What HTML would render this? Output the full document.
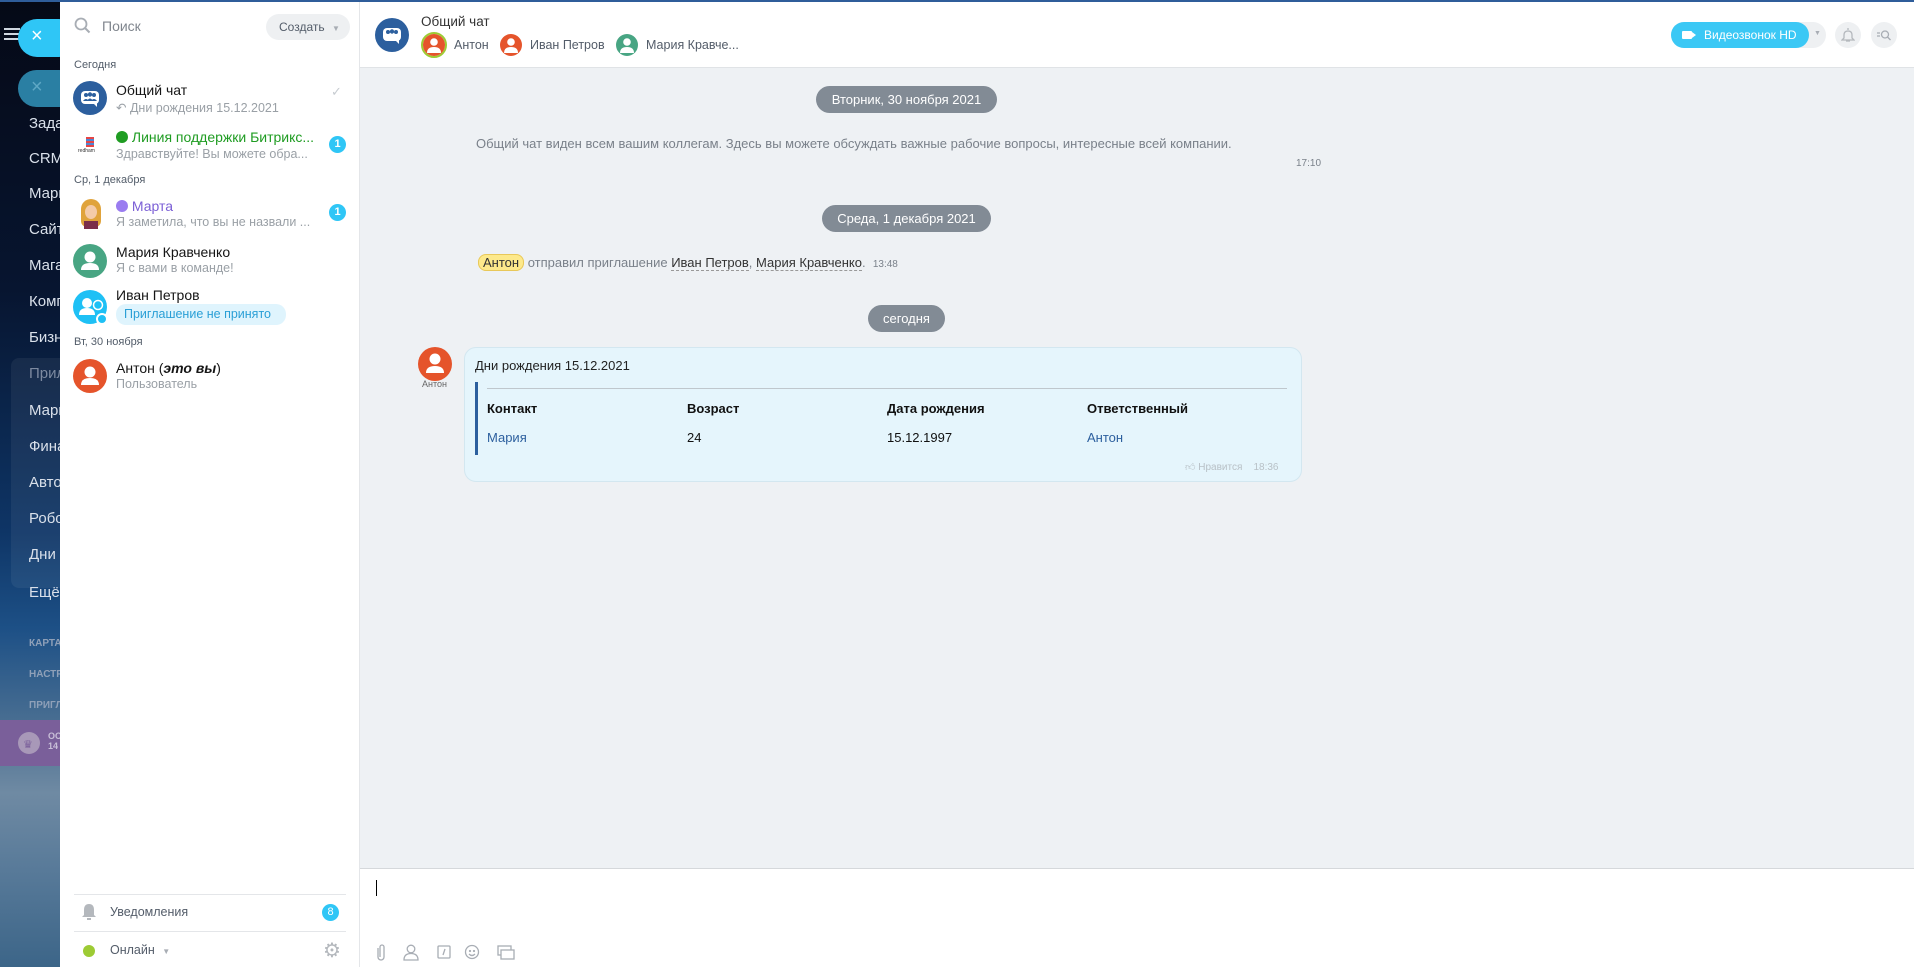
<!DOCTYPE html>
<html><head><meta charset="utf-8">
<style>
*{box-sizing:border-box;margin:0;padding:0}
body{width:1914px;height:967px;overflow:hidden;font-family:"Liberation Sans",Arial,sans-serif;position:relative;background:#fff}
.abs{position:absolute}
#side{left:0;top:0;width:60px;height:967px;background:linear-gradient(180deg,#050916 0%,#071530 30%,#0e3566 55%,#1d5086 65%,#4a6f92 75%,#6f8aa3 82%,#587a99 90%,#3c6588 100%)}
#side .it{position:absolute;left:29px;color:#d9e0ea;font-size:15px;white-space:nowrap}
#side .sm{position:absolute;left:29px;color:#8fa0b8;font-size:10px;font-weight:bold;white-space:nowrap}
#topline{left:0;top:0;width:1914px;height:2px;background:#2f5d9a;z-index:5}
#list{left:60px;top:0;width:300px;height:967px;background:#fff;border-right:1px solid #e4e6e9}
.sec{position:absolute;left:14px;font-size:11px;color:#525c69}
.av{position:absolute;left:13px;width:34px;height:34px;border-radius:50%}
.t1{position:absolute;left:56px;font-size:14px;color:#151515;white-space:nowrap}
.t2{position:absolute;left:56px;font-size:12.5px;color:#9aa0a6;white-space:nowrap}
.badge{position:absolute;left:269px;width:17px;height:17px;border-radius:50%;background:#2fc6f6;color:#fff;font-size:11px;font-weight:bold;text-align:center;line-height:17px}
.person{fill:#fff}
#chat{left:360px;top:0;width:1554px;height:967px}
#head{left:0;top:0;width:1554px;height:68px;background:#fff;border-bottom:1px solid #e0e3e6}
#msgs{left:0;top:68px;width:1554px;height:800px;background:#eef1f4}
.pill{position:absolute;height:27px;border-radius:14px;background:#828b95;color:#fff;font-size:13px;line-height:27px;text-align:center}
#input{left:0;top:868px;width:1554px;height:99px;background:#fff;border-top:1px solid #d5d8db}
.mav{position:absolute;width:22px;height:22px;border-radius:50%;overflow:hidden}
</style></head><body>
<div id="topline" class="abs"></div>

<div id="side" class="abs">
  <div style="position:absolute;left:4px;top:28px;width:16px;height:2px;background:#cfd6df;box-shadow:0 5px 0 #cfd6df,0 10px 0 #cfd6df"></div>
  <div style="position:absolute;left:18px;top:19px;width:60px;height:38px;border-radius:19px;background:#2fc6f6"></div>
  <div style="position:absolute;left:31px;top:25px;color:#fff;font-size:20px">×</div>
  <div style="position:absolute;left:18px;top:70px;width:60px;height:37px;border-radius:19px;background:#2a7fa3"></div>
  <div style="position:absolute;left:31px;top:76px;color:#5fa8c5;font-size:20px">×</div>
  <div class="it" style="top:115px">Задачи</div>
  <div class="it" style="top:150px">CRM</div>
  <div class="it" style="top:185px">Маркетинг</div>
  <div class="it" style="top:221px">Сайты</div>
  <div class="it" style="top:257px">Магазины</div>
  <div class="it" style="top:293px">Компания</div>
  <div class="it" style="top:329px">Бизнес</div>
  <div style="position:absolute;left:11px;top:358px;width:60px;height:230px;border-radius:8px;background:rgba(255,255,255,0.06)"></div>
  <div class="it" style="top:365px;color:#7d8aa0">Приложения</div>
  <div class="it" style="top:402px">Маркет</div>
  <div class="it" style="top:438px">Финансы</div>
  <div class="it" style="top:474px">Автоматизация</div>
  <div class="it" style="top:510px">Роботы</div>
  <div class="it" style="top:546px">Дни</div>
  <div class="it" style="top:584px">Ещё</div>
  <div class="sm" style="top:638px">КАРТА</div>
  <div class="sm" style="top:669px">НАСТРОЙКИ</div>
  <div class="sm" style="top:700px">ПРИГЛАСИТЬ</div>
  <div style="position:absolute;left:0;top:720px;width:60px;height:46px;background:#7a5f9a"></div>
  <div style="position:absolute;left:18px;top:732px;width:22px;height:22px;border-radius:50%;background:#a898b8"></div>
  <div style="position:absolute;left:23px;top:738px;color:#7a5f9a;font-size:11px">♛</div>
  <div style="position:absolute;left:48px;top:731px;color:#c9bfd8;font-size:9px;font-weight:bold">ОС<br>14</div>
</div>

<div id="list" class="abs">
  <svg style="position:absolute;left:14px;top:17px" width="17" height="17" viewBox="0 0 17 17"><circle cx="7" cy="7" r="5.5" fill="none" stroke="#a8adb4" stroke-width="1.8"/><path d="M11 11l4.5 4.5" stroke="#a8adb4" stroke-width="2"/></svg>
  <div style="position:absolute;left:42px;top:18px;font-size:14px;color:#80868e">Поиск</div>
  <div style="position:absolute;left:206px;top:14px;width:84px;height:26px;border-radius:13px;background:#eef0f2;font-size:12px;color:#535c69;line-height:26px;padding-left:13px">Создать <span style="color:#a8adb4;font-size:8px;margin-left:4px">▼</span></div>

  <div class="sec" style="top:59px">Сегодня</div>
  <div class="av" style="top:81px;background:#2c5f9e"><svg width="34" height="34" viewBox="0 0 34 34"><rect x="8" y="10" width="18" height="13" rx="4" fill="#fff"/><path d="M20 22l4 4v-5z" fill="#fff"/><circle cx="13" cy="14" r="2" fill="#2c5f9e"/><circle cx="17" cy="13.5" r="2.2" fill="#2c5f9e"/><circle cx="21" cy="14" r="2" fill="#2c5f9e"/><path d="M10 20q3-4 6 0M14 20q3-5 6 0M18 20q3-4 6 0" fill="#2c5f9e"/></svg></div>
  <div class="t1" style="top:82px">Общий чат</div>
  <div class="t2" style="top:100px">↶ Дни рождения 15.12.2021</div>
  <div style="position:absolute;left:271px;top:84px;color:#c7ccd1;font-size:13px">✓</div>

  <div class="av" style="top:127px;background:#fff"><div style="position:absolute;left:13px;top:10px;width:8px;height:10px;background:repeating-linear-gradient(#e64545 0 2px,#4a86d6 2px 4px)"></div><div style="position:absolute;left:5px;top:21px;font-size:5px;color:#333">redham</div></div>
  <div class="t1" style="top:129px;color:#1f9c22">
    <span style="display:inline-block;width:12px;height:12px;border-radius:50%;background:#1f9c22;vertical-align:-1px"></span> Линия поддержки Битрикс...</div>
  <div class="t2" style="top:147px">Здравствуйте! Вы можете обра...</div>
  <div class="badge" style="top:136px">1</div>

  <div class="sec" style="top:174px">Ср, 1 декабря</div>
  <div class="av" style="top:197px;background:#fff"><div style="position:absolute;left:8px;top:2px;width:20px;height:28px;border-radius:10px 10px 6px 6px;background:#e0a33b"></div><div style="position:absolute;left:12px;top:8px;width:12px;height:14px;border-radius:50%;background:#f4cba8"></div><div style="position:absolute;left:11px;top:24px;width:14px;height:8px;background:#7a2d4a"></div></div>
  <div class="t1" style="top:198px;color:#7b5fd6"><span style="display:inline-block;width:12px;height:12px;border-radius:50%;background:#9a7cf0;vertical-align:-1px"></span> Марта</div>
  <div class="t2" style="top:215px">Я заметила, что вы не назвали ...</div>
  <div class="badge" style="top:204px">1</div>

  <div class="av" style="top:244px;background:#48a583"><svg width="34" height="34"><circle cx="17" cy="13" r="5.5" class="person"/><path d="M8 26q0-7 9-7t9 7z" class="person"/></svg></div>
  <div class="t1" style="top:244px">Мария Кравченко</div>
  <div class="t2" style="top:261px">Я с вами в команде!</div>

  <div class="av" style="top:290px;background:#1ec0f5"><svg width="34" height="34"><circle cx="14" cy="13" r="5" class="person"/><path d="M6 25q0-7 8-7t8 7z" class="person"/><circle cx="25" cy="15" r="4.5" fill="none" stroke="#fff" stroke-width="1.5"/></svg><div style="position:absolute;left:23px;top:23px;width:12px;height:12px;border-radius:50%;background:#1ec0f5;border:2px solid #fff"></div></div>
  <div class="t1" style="top:287px">Иван Петров</div>
  <div style="position:absolute;left:56px;top:304px;height:21px;width:170px;border-radius:10px;background:#dff4fd;color:#2a9fd6;font-size:12.5px;line-height:21px;padding-left:8px">Приглашение не принято</div>

  <div class="sec" style="top:336px">Вт, 30 ноября</div>
  <div class="av" style="top:359px;background:#e5542b"><svg width="34" height="34"><circle cx="17" cy="13" r="5.5" class="person"/><path d="M8 26q0-7 9-7t9 7z" class="person"/></svg></div>
  <div class="t1" style="top:360px">Антон (<b><i>это вы</i></b>)</div>
  <div class="t2" style="top:377px">Пользователь</div>

  <div style="position:absolute;left:14px;top:894px;width:272px;height:1px;background:#e4e6e9"></div>
  <svg style="position:absolute;left:22px;top:903px" width="14" height="18" viewBox="0 0 14 18"><path d="M7 1q5 0 5 6v5l2 2H0l2-2V7q0-6 5-6z" fill="#b4b8bd"/><rect x="5" y="15" width="4" height="2" fill="#b4b8bd"/></svg>
  <div style="position:absolute;left:50px;top:905px;font-size:12.5px;color:#535c69">Уведомления</div>
  <div style="position:absolute;left:262px;top:904px;width:17px;height:17px;border-radius:50%;background:#2fc6f6;color:#fff;font-size:11px;text-align:center;line-height:17px">8</div>
  <div style="position:absolute;left:14px;top:931px;width:272px;height:1px;background:#e4e6e9"></div>
  <div style="position:absolute;left:23px;top:945px;width:12px;height:12px;border-radius:50%;background:#9dcb34"></div>
  <div style="position:absolute;left:50px;top:943px;font-size:12.5px;color:#535c69">Онлайн <span style="color:#a8adb4;font-size:8px;margin-left:4px">▼</span></div>
  <div style="position:absolute;left:263px;top:938px;font-size:20px;color:#b4b8bd">⚙</div>
</div>

<div id="chat" class="abs">
  <div id="head" class="abs">
    <div style="position:absolute;left:15px;top:18px;width:34px;height:34px;border-radius:50%;background:#2c5f9e"><svg width="34" height="34" viewBox="0 0 34 34"><rect x="8" y="10" width="18" height="13" rx="4" fill="#fff"/><path d="M20 22l4 4v-5z" fill="#fff"/><circle cx="13" cy="14" r="2" fill="#2c5f9e"/><circle cx="17" cy="13.5" r="2.2" fill="#2c5f9e"/><circle cx="21" cy="14" r="2" fill="#2c5f9e"/></svg></div>
    <div style="position:absolute;left:61px;top:14px;font-size:13.5px;color:#333">Общий чат</div>
    <div style="position:absolute;left:61px;top:32px;width:26px;height:26px;border-radius:50%;border:2px solid #9dcb34;background:#fff"></div>
    <div class="mav" style="left:63px;top:34px;background:#e5542b"><svg width="22" height="22"><circle cx="11" cy="8" r="3.8" fill="#fff"/><path d="M4 19q0-6 7-6t7 6z" fill="#fff"/></svg></div>
    <div style="position:absolute;left:94px;top:38px;font-size:12.5px;color:#535c69">Антон</div>
    <div class="mav" style="left:140px;top:34px;background:#e5542b"><svg width="22" height="22"><circle cx="11" cy="8" r="3.8" fill="#fff"/><path d="M4 19q0-6 7-6t7 6z" fill="#fff"/></svg></div>
    <div style="position:absolute;left:170px;top:38px;font-size:12.5px;color:#535c69">Иван Петров</div>
    <div class="mav" style="left:256px;top:34px;background:#48a583"><svg width="22" height="22"><circle cx="11" cy="8" r="3.8" fill="#fff"/><path d="M4 19q0-6 7-6t7 6z" fill="#fff"/></svg></div>
    <div style="position:absolute;left:286px;top:38px;font-size:12.5px;color:#535c69">Мария Кравче...</div>

    <div style="position:absolute;left:1311px;top:22px;width:155px;height:26px;border-radius:13px;background:#eef0f2"></div>
    <div style="position:absolute;left:1311px;top:22px;width:138px;height:26px;border-radius:13px;background:#3bc8f5;color:#fff;font-size:12px;line-height:26px;padding-left:33px">Видеозвонок HD</div>
    <div style="position:absolute;left:1322px;top:31px;width:10px;height:8px;background:#fff;border-radius:1px"></div>
    <div style="position:absolute;left:1332px;top:32px;border:3px solid transparent;border-right:4px solid #fff;transform:rotate(180deg)"></div>
    <div style="position:absolute;left:1454px;top:30px;color:#a8adb4;font-size:7px">▼</div>
    <div style="position:absolute;left:1475px;top:22px;width:26px;height:26px;border-radius:50%;background:#eef0f2"></div>
    <svg style="position:absolute;left:1481px;top:27px" width="14" height="16" viewBox="0 0 14 16" fill="none" stroke="#b4b8bd" stroke-width="1.3"><path d="M7 1v2M3 11V8q0-4 4-4t4 4v3l2 2H1z"/><path d="M5 14h4"/></svg>
    <div style="position:absolute;left:1511px;top:22px;width:26px;height:26px;border-radius:50%;background:#eef0f2"></div>
    <svg style="position:absolute;left:1516px;top:29px" width="16" height="12" viewBox="0 0 16 12" fill="none" stroke="#a8adb4" stroke-width="1.3"><path d="M1 4h3M1 7h3"/><circle cx="9" cy="5.5" r="3.5"/><path d="M11.5 8l3 3"/></svg>
  </div>

  <div id="msgs" class="abs">
    <div class="pill" style="left:456px;top:18px;width:181px">Вторник, 30 ноября 2021</div>
    <div style="position:absolute;left:116px;top:68px;font-size:13px;color:#7a818a">Общий чат виден всем вашим коллегам. Здесь вы можете обсуждать важные рабочие вопросы, интересные всей компании.</div>
    <div style="position:absolute;left:936px;top:90px;font-size:10px;color:#7a818a">17:10</div>

    <div class="pill" style="left:462px;top:137px;width:169px">Среда, 1 декабря 2021</div>
    <div style="position:absolute;left:118px;top:187px;font-size:13px;color:#7a818a;white-space:nowrap"><span style="background:#fde98b;border:1px solid #e8c85a;border-radius:8px;padding:0 4px;color:#333">Антон</span> отправил приглашение <span style="color:#333;border-bottom:1px dashed #999">Иван Петров</span>, <span style="color:#333;border-bottom:1px dashed #999">Мария Кравченко</span>.&nbsp; <span style="font-size:10px">13:48</span></div>

    <div class="pill" style="left:508px;top:237px;width:77px">сегодня</div>

    <div style="position:absolute;left:58px;top:279px;width:34px;height:34px;border-radius:50%;background:#e5542b"><svg width="34" height="34"><circle cx="17" cy="12" r="5.5" class="person"/><path d="M8 26q0-7 9-7t9 7z" class="person"/></svg></div>
    <div style="position:absolute;left:62px;top:311px;font-size:9px;color:#666">Антон</div>
    <div style="position:absolute;left:104px;top:279px;width:838px;height:135px;border-radius:12px;background:#e5f5fc;border:1px solid #d3e7f0">
      <div style="position:absolute;left:10px;top:10px;font-size:13px;color:#222">Дни рождения 15.12.2021</div>
      <div style="position:absolute;left:10px;top:34px;width:3px;height:73px;background:#2c5f9e"></div>
      <div style="position:absolute;left:22px;top:40px;width:800px;height:1px;background:#bfc7cd"></div>
      <div style="position:absolute;left:22px;top:53px;font-size:13px;font-weight:bold;color:#111">Контакт</div>
      <div style="position:absolute;left:222px;top:53px;font-size:13px;font-weight:bold;color:#111">Возраст</div>
      <div style="position:absolute;left:422px;top:53px;font-size:13px;font-weight:bold;color:#111">Дата рождения</div>
      <div style="position:absolute;left:622px;top:53px;font-size:13px;font-weight:bold;color:#111">Ответственный</div>
      <div style="position:absolute;left:22px;top:82px;font-size:13px;color:#2c5f9e">Мария</div>
      <div style="position:absolute;left:222px;top:82px;font-size:13px;color:#111">24</div>
      <div style="position:absolute;left:422px;top:82px;font-size:13px;color:#111">15.12.1997</div>
      <div style="position:absolute;left:622px;top:82px;font-size:13px;color:#2c5f9e">Антон</div>
      <div style="position:absolute;left:720px;top:113px;font-size:10px;color:#b8c0c6">👍︎ Нравится &nbsp;&nbsp; 18:36</div>
    </div>
  </div>

  <div id="input" class="abs">
    <div style="position:absolute;left:16px;top:11px;width:1px;height:16px;background:#000"></div>
    <svg style="position:absolute;left:12px;top:74px" width="160" height="20" viewBox="0 0 160 20" fill="none" stroke="#a8adb4" stroke-width="1.3">
      <path d="M6 5v9a3 3 0 006 0V4a2 2 0 00-4 0v10"/>
      <circle cx="39" cy="6" r="3.8"/><path d="M32 17q0-6.5 7-6.5t7 6.5z"/>
      <rect x="66" y="3" width="12" height="12" rx="1"/><path d="M71 12l2-6"/>
      <circle cx="100" cy="9" r="6.5"/><circle cx="98" cy="8" r=".5"/><circle cx="102" cy="8" r=".5"/><path d="M97 11q3 3 6 0"/>
      <rect x="126" y="3" width="13" height="9"/><rect x="129" y="7" width="13" height="9" fill="#fff"/>
    </svg>
  </div>
</div>
</body></html>
